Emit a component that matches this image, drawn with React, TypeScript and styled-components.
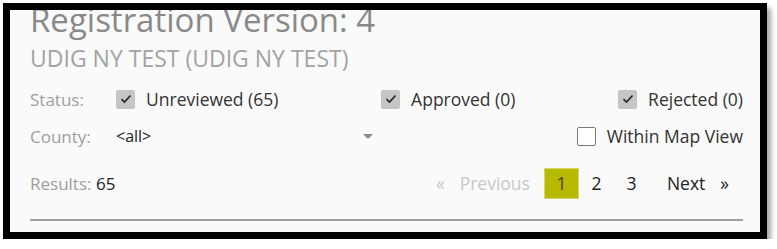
import React from 'react';
import styled, { createGlobalStyle } from 'styled-components';

const GlobalStyle = createGlobalStyle`
  html, body {
    margin: 0;
    padding: 0;
    background: #ffffff;
    font-family: 'Open Sans', 'Noto Sans', sans-serif;
  }
`;

const Frame = styled.div`
  margin: 3px 0 0 3px;
  width: 764px;
  height: 236px;
  box-sizing: border-box;
  border: 7px solid #000;
  background: #fafafa;
  box-shadow: 4px 5px 5px rgba(0, 0, 0, 0.35);
  overflow: hidden;
  padding: 0 17px 0 20px;
`;

const Title = styled.h1`
  margin: -8px 0 0 0;
  font-size: 33px;
  line-height: 36px;
  font-weight: 400;
  color: #898989;
  white-space: nowrap;
`;

const Subtitle = styled.h2`
  margin: 7px 0 0 0;
  font-size: 23px;
  line-height: 26px;
  font-weight: 400;
  color: #a3a3a3;
`;

interface rowType {
  h: number;
  top?: number;
}

const Row = styled.div<rowType>`
  display: flex;
  align-items: center;
  height: ${(props) => props.h}px;
  margin-top: ${(props) => props.top || 0}px;
`;

const Label = styled.span`
  width: 86px;
  font-size: 17px;
  color: #9e9e9e;
  flex-shrink: 0;
`;

const StatusGroup = styled.div`
  flex: 1;
  display: flex;
  justify-content: space-between;
`;

const CheckItem = styled.label`
  display: flex;
  align-items: center;
  gap: 11px;
  font-size: 17.5px;
  color: #333;
`;

interface boxType {
  checked: boolean;
}

const Box = styled.span<boxType>`
  width: 19px;
  height: 19px;
  box-sizing: border-box;
  border: 1px solid ${(props) => (props.checked ? '#c4c4c4' : '#7a7a7a')};
  border-radius: 2px;
  background: ${(props) => (props.checked ? '#c6c6c6' : '#fff')};
  display: flex;
  align-items: center;
  justify-content: center;
`;

const Select = styled.div`
  width: 259px;
  display: flex;
  justify-content: space-between;
  align-items: center;
  font-size: 16px;
  color: #222;
`;

const Arrow = styled.span`
  width: 0;
  height: 0;
  border-left: 5px solid transparent;
  border-right: 5px solid transparent;
  border-top: 5px solid #888;
  margin-right: 2px;
`;

const Spacer = styled.div`
  flex: 1;
`;

const Results = styled.span`
  font-size: 17px;
  color: #9e9e9e;
  b {
    font-weight: 400;
    color: #222;
  }
`;

const Pager = styled.nav`
  display: flex;
  align-items: center;
  font-size: 17.5px;
`;

interface pageType {
  active?: boolean;
  disabled?: boolean;
}

const PageItem = styled.span<pageType>`
  display: flex;
  align-items: center;
  justify-content: center;
  width: 35px;
  height: 31px;
  color: ${(props) =>
    props.disabled ? '#c8c8c8' : props.active ? '#4a3c00' : '#222'};
  background: ${(props) => (props.active ? '#b6ba00' : 'transparent')};
  border: 1px solid ${(props) => (props.active ? '#d6d86a' : 'transparent')};
  box-sizing: border-box;
`;

interface wideType {
  pad: string;
}

const Wide = styled(PageItem)<wideType>`
  width: auto;
  padding: ${(props) => props.pad};
  gap: 15px;
`;

const Rule = styled.hr`
  margin: 8px 0 0 0;
  border: none;
  border-top: 2px solid #a0a0a0;
`;

function Check() {
  return (
    <svg width="12" height="10" viewBox="0 0 12 10">
      <path d="M1.5 5.2 L4.5 8 L10.5 1.5" fill="none" stroke="#222" strokeWidth="1.6" />
    </svg>
  );
}

function CheckBox({ label, checked }: { label: string; checked: boolean }) {
  return (
    <CheckItem>
      <Box checked={checked}>{checked && <Check />}</Box>
      {label}
    </CheckItem>
  );
}

function App() {
  return (
    <>
      <GlobalStyle />
      <Frame>
        <Title>Registration Version: 4</Title>
        <Subtitle>UDIG NY TEST (UDIG NY TEST)</Subtitle>
        <Row h={36} top={10}>
          <Label>Status:</Label>
          <StatusGroup>
            <CheckBox label="Unreviewed (65)" checked />
            <CheckBox label="Approved (0)" checked />
            <CheckBox label="Rejected (0)" checked />
          </StatusGroup>
        </Row>
        <Row h={38}>
          <Label>County:</Label>
          <Select>
            <span>&lt;all&gt;</span>
            <Arrow />
          </Select>
          <Spacer />
          <CheckBox label="Within Map View" checked={false} />
        </Row>
        <Row h={56}>
          <Results>
            Results: <b>65</b>
          </Results>
          <Spacer />
          <Pager>
            <Wide disabled pad="0 13px 0 0">
              <span>«</span>
              <span>Previous</span>
            </Wide>
            <PageItem active>1</PageItem>
            <PageItem>2</PageItem>
            <PageItem>3</PageItem>
            <Wide pad="0 13px 0 17px">
              <span>Next</span>
              <span>»</span>
            </Wide>
          </Pager>
        </Row>
        <Rule />
      </Frame>
    </>
  );
}

export default App;
